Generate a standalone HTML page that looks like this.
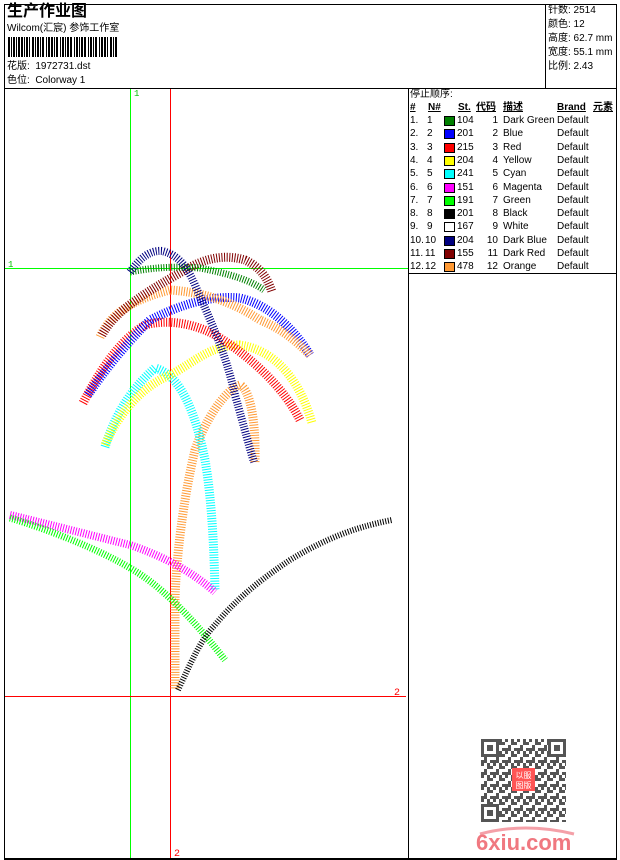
<!DOCTYPE html>
<html><head><meta charset="utf-8">
<style>
*{margin:0;padding:0;box-sizing:border-box}
body{width:620px;height:860px;background:#fff;position:relative;font-family:"Liberation Sans","Noto Sans CJK SC",sans-serif;font-size:10px;color:#000;overflow:hidden}
.a{position:absolute;white-space:nowrap;line-height:12px}
.b{position:absolute;background:#000}
</style></head><body>
<div class="b" style="left:4px;top:4px;width:613px;height:1px"></div>
<div class="b" style="left:4px;top:4px;width:1px;height:856px"></div>
<div class="b" style="left:616px;top:4px;width:1px;height:856px"></div>
<div class="b" style="left:4px;top:858px;width:613px;height:2px"></div>
<div class="b" style="left:4px;top:88px;width:613px;height:1px"></div>
<div class="b" style="left:545px;top:4px;width:1px;height:84px"></div>
<div class="b" style="left:408px;top:88px;width:1px;height:771px"></div>
<div class="b" style="left:408px;top:273px;width:209px;height:1px"></div>

<div class="a" style="left:7px;top:3px;font-size:16px;line-height:18px;font-weight:bold">生产作业图</div>
<div class="a" style="left:7px;top:23px">Wilcom(汇宸) 参饰工作室</div>
<svg class="a" style="left:8px;top:37px" width="112" height="20">
<g fill="#000">
<rect x="0" y="0" width="2" height="20"/><rect x="3" y="0" width="1" height="20"/><rect x="5" y="0" width="2" height="20"/><rect x="8" y="0" width="1" height="20"/><rect x="10" y="0" width="2" height="20"/><rect x="13" y="0" width="2" height="20"/><rect x="16" y="0" width="1" height="20"/><rect x="18" y="0" width="2" height="20"/><rect x="21" y="0" width="1" height="20"/><rect x="24" y="0" width="2" height="20"/><rect x="27" y="0" width="1" height="20"/><rect x="29" y="0" width="2" height="20"/><rect x="32" y="0" width="1" height="20"/><rect x="34" y="0" width="2" height="20"/><rect x="38" y="0" width="1" height="20"/><rect x="40" y="0" width="2" height="20"/><rect x="43" y="0" width="2" height="20"/><rect x="46" y="0" width="1" height="20"/><rect x="48" y="0" width="2" height="20"/><rect x="52" y="0" width="1" height="20"/><rect x="54" y="0" width="2" height="20"/><rect x="57" y="0" width="1" height="20"/><rect x="59" y="0" width="2" height="20"/><rect x="62" y="0" width="2" height="20"/><rect x="66" y="0" width="1" height="20"/><rect x="68" y="0" width="2" height="20"/><rect x="71" y="0" width="1" height="20"/><rect x="73" y="0" width="2" height="20"/><rect x="76" y="0" width="2" height="20"/><rect x="80" y="0" width="1" height="20"/><rect x="82" y="0" width="2" height="20"/><rect x="85" y="0" width="1" height="20"/><rect x="87" y="0" width="2" height="20"/><rect x="91" y="0" width="1" height="20"/><rect x="93" y="0" width="2" height="20"/><rect x="96" y="0" width="2" height="20"/><rect x="99" y="0" width="1" height="20"/><rect x="102" y="0" width="2" height="20"/><rect x="105" y="0" width="1" height="20"/><rect x="107" y="0" width="2" height="20"/>
</g></svg>
<div class="a" style="left:7px;top:61px">花版:&nbsp; 1972731.dst</div>
<div class="a" style="left:7px;top:75px">色位:&nbsp; Colorway 1</div>

<div class="a" style="left:548px;top:5px">针数: 2514</div>
<div class="a" style="left:548px;top:19px">颜色: 12</div>
<div class="a" style="left:548px;top:33px">高度: 62.7 mm</div>
<div class="a" style="left:548px;top:47px">宽度: 55.1 mm</div>
<div class="a" style="left:548px;top:61px">比例: 2.43</div>

<div class="a" style="left:410px;top:89px">停止顺序:</div>
<div class="a" style="left:410px;top:102px;font-weight:bold;text-decoration:underline">#</div>
<div class="a" style="left:428px;top:102px;font-weight:bold;text-decoration:underline">N#</div>
<div class="a" style="left:458px;top:102px;font-weight:bold;text-decoration:underline">St.</div>
<div class="a" style="left:476px;top:102px;font-weight:bold;text-decoration:underline">代码</div>
<div class="a" style="left:503px;top:102px;font-weight:bold;text-decoration:underline">描述</div>
<div class="a" style="left:557px;top:102px;font-weight:bold;text-decoration:underline">Brand</div>
<div class="a" style="left:593px;top:102px;font-weight:bold;text-decoration:underline">元素</div>
<div id="rows"></div>
<script>
var d=[["104","Dark Green","#008000"],["201","Blue","#0000ff"],["215","Red","#ff0000"],["204","Yellow","#ffff00"],["241","Cyan","#00ffff"],["151","Magenta","#ff00ff"],["191","Green","#00ff00"],["201","Black","#000000"],["167","White","#ffffff"],["204","Dark Blue","#000080"],["155","Dark Red","#800000"],["478","Orange","#ff9933"]];
var h="";
for(var i=0;i<12;i++){var y=115+i*13.3;
h+='<div class="a" style="left:410px;top:'+y+'px">'+(i+1)+'.</div>';
h+='<div class="a" style="left:'+(i<9?427:425)+'px;top:'+y+'px">'+(i+1)+'</div>';
h+='<div class="a" style="left:444px;top:'+(y+1)+'px;width:11px;height:10px;border:1px solid #000;background:'+d[i][2]+'"></div>';
h+='<div class="a" style="left:457px;top:'+y+'px">'+d[i][0]+'</div>';
h+='<div class="a" style="left:478px;top:'+y+'px;width:20px;text-align:right">'+(i+1)+'</div>';
h+='<div class="a" style="left:503px;top:'+y+'px">'+d[i][1]+'</div>';
h+='<div class="a" style="left:557px;top:'+y+'px">Default</div>';}
document.getElementById("rows").innerHTML=h;
</script>

<svg class="a" style="left:0;top:0" width="408" height="860">
<line x1="130.5" y1="89" x2="130.5" y2="858" stroke="#00ff00"/>
<line x1="5" y1="268.5" x2="408" y2="268.5" stroke="#00ff00"/>
<line x1="170.5" y1="89" x2="170.5" y2="858" stroke="#ff0000"/>
<line x1="5" y1="696.5" x2="406" y2="696.5" stroke="#ff0000"/>
<text x="134" y="96" fill="#00c000" font-size="9" font-family="Liberation Mono">1</text>
<text x="8" y="267" fill="#00c000" font-size="9" font-family="Liberation Mono">1</text>
<text x="394" y="695" fill="#ff0000" font-size="10" font-family="Liberation Mono">2</text>
<text x="174" y="856" fill="#ff0000" font-size="10" font-family="Liberation Mono">2</text>
<g fill="none" stroke-linejoin="round" stroke-dasharray="1 1.6">
<path stroke="#ff9933" stroke-width="9" d="M255,462 C256,420 250,390 240,385 C225,390 205,420 195,450 C183,500 176,560 175,600 L175,690"/>
<path stroke="#00ffff" stroke-width="9" d="M105,447 C115,415 130,390 155,368 C180,375 195,410 205,460 C212,500 214,550 215,590"/>
<path stroke="#ffff00" stroke-width="9" d="M105,445 C120,410 145,385 170,375 C195,362 210,345 240,345 C275,350 300,380 312,423"/>
<path stroke="#ff0000" stroke-width="9" d="M83,403 C100,370 120,340 145,325 C170,318 200,325 220,338 C255,360 285,390 300,420"/>
<path stroke="#0000ff" stroke-width="9" d="M88,395 C105,370 125,345 150,320 C180,305 210,295 240,298 C270,305 295,330 310,355"/>
<path stroke="#ff9933" stroke-width="9" d="M100,337 C110,315 130,300 170,290 C200,292 230,300 260,320 C285,330 300,345 310,355"/>
<path stroke="#800000" stroke-width="9" d="M102,335 C115,310 150,290 185,270 C205,258 225,254 245,260 C262,268 268,280 272,292"/>
<path stroke="#008000" stroke-width="7" d="M130,272 C150,268 170,266 200,268 C230,274 250,280 264,290"/>
<path stroke="#000080" stroke-width="8" d="M130,272 C140,258 150,250 162,251 C175,254 185,262 195,285 C210,320 225,350 235,395 C245,430 250,450 254,462"/>
<path stroke="#ff00ff" stroke-width="8" d="M10,515 C40,522 90,535 130,545 C160,555 190,570 215,592"/>
<path stroke="#00ff00" stroke-width="7" d="M10,518 C50,530 100,550 130,568 C160,585 190,615 225,660"/>
<path stroke="#000" stroke-width="6" d="M178,690 C190,665 200,640 215,625 C235,600 260,580 290,560 C320,542 350,528 392,520"/>
</g></svg>

<svg class="a" style="left:481px;top:739px" width="85" height="83">
<defs><pattern id="q" width="12" height="12" patternUnits="userSpaceOnUse">
<rect width="12" height="12" fill="#fff"/>
<g fill="#555"><rect x="0" y="0" width="3" height="3"/><rect x="6" y="0" width="3" height="6"/><rect x="3" y="6" width="3" height="3"/><rect x="9" y="3" width="3" height="3"/><rect x="0" y="9" width="6" height="3"/><rect x="9" y="9" width="3" height="3"/></g></pattern></defs>
<rect width="85" height="83" fill="url(#q)"/>
<g fill="#555">
<rect x="0" y="0" width="18" height="18"/><rect x="3" y="3" width="12" height="12" fill="#fff"/><rect x="6" y="6" width="6" height="6"/>
<rect x="67" y="0" width="18" height="18"/><rect x="70" y="3" width="12" height="12" fill="#fff"/><rect x="73" y="6" width="6" height="6"/>
<rect x="0" y="65" width="18" height="18"/><rect x="3" y="68" width="12" height="12" fill="#fff"/><rect x="6" y="71" width="6" height="6"/>
</g>
<rect x="31" y="29" width="23" height="23" fill="#f55"/>
<text x="42.5" y="39" fill="#fff" font-size="8" text-anchor="middle" font-family="Noto Sans CJK SC">以服</text>
<text x="42.5" y="49" fill="#fff" font-size="8" text-anchor="middle" font-family="Noto Sans CJK SC">图版</text>
</svg>
<svg class="a" style="left:470px;top:822px" width="110" height="32">
<path d="M10,12 Q55,0 104,12" stroke="#f4a0a8" stroke-width="3" fill="none"/>
<text x="6" y="28" fill="#f07880" font-size="22" font-weight="bold" font-family="Liberation Sans">6xiu.com</text>
</svg>
</body></html>
